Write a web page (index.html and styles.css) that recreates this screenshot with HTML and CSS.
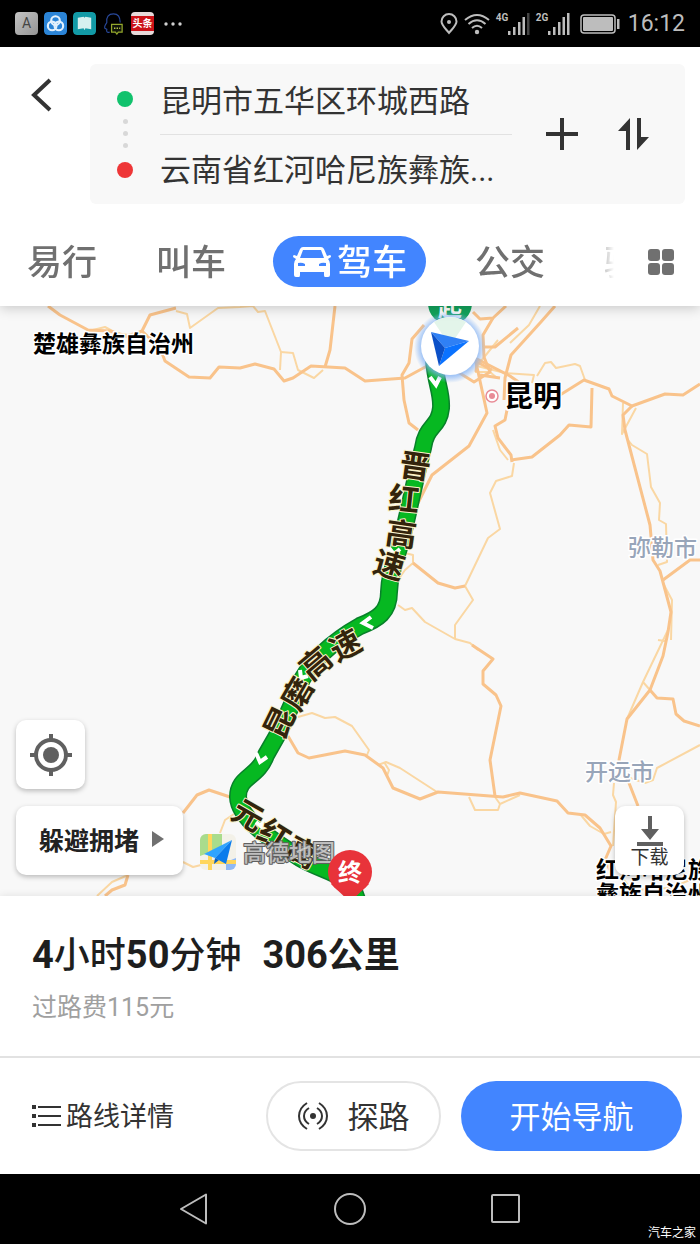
FILE: index.html
```html
<!DOCTYPE html>
<html lang="zh-CN">
<head>
    <meta charset="UTF-8">
    <meta name="viewport" content="width=device-width, initial-scale=1.0">
    <title>路线规划</title>
    <link rel="stylesheet" href="styles.css">
</head>
<body>
    <div class="status-bar">
        <div class="status-left">
            <span class="app-icon app-a">A</span>
            <svg class="app-icon" viewBox="0 0 24 24">
                <rect width="24" height="24" rx="4" fill="#2b84d6"/>
                <g fill="none" stroke="#e4f1fc" stroke-width="2.2">
                    <circle cx="12" cy="9" r="4.5"/>
                    <circle cx="8.5" cy="14.5" r="4.5"/>
                    <circle cx="15.5" cy="14.5" r="4.5"/>
                </g>
            </svg>
            <svg class="app-icon" viewBox="0 0 24 24">
                <rect width="24" height="24" rx="4" fill="#129aa6"/>
                <path d="M5 6 L11 5 L12 6 L13 5 L19 6 V18 L13 17 L12 19 L11 17 L5 18 Z" fill="#d5f0f0"/>
            </svg>
            <svg class="app-icon" viewBox="0 0 24 24">
                <path d="M8 21 Q4 22 5 18 L3 17 Q2 15 5 11 Q4 2 12 2 Q19 2 19 11" fill="none" stroke="#28489a" stroke-width="1.2"/>
                <path d="M10 13 H21 V21 H17 L15.500 23 L14 21 H10 Z" fill="#10140a" stroke="#94a82c" stroke-width="1.300"/>
                <path d="M12.500 17 H19" stroke="#b8c84a" stroke-width="1.500" stroke-dasharray="1.500 1.200"/>
            </svg>
            <span class="app-icon app-news"><b>头条</b></span>
            <svg class="more-dots" viewBox="0 0 18 6">
                <g fill="#d0d0d0"><circle cx="2" cy="3" r="1.700"/><circle cx="9" cy="3" r="1.700"/><circle cx="16" cy="3" r="1.700"/></g>
            </svg>
        </div>
        <div class="status-right">
            <svg width="18" height="22" viewBox="0 0 18 22">
                <path d="M9 20 C5 15 1.500 12 1.500 8.500 A7.500 7.500 0 0 1 16.500 8.500 C16.500 12 13 15 9 20 Z" fill="none" stroke="#bdbdbd" stroke-width="2"/>
                <circle cx="9" cy="9" r="2" fill="#bdbdbd"/>
            </svg>
            <svg width="26" height="22" viewBox="0 0 26 22">
                <g fill="none" stroke="#bdbdbd" stroke-width="2">
                    <path d="M1 7 Q13 -3 25 7"/><path d="M4.500 11 Q13 3.500 21.500 11"/><path d="M8 15 Q13 10.500 18 15"/>
                </g>
                <circle cx="13" cy="19" r="2.200" fill="#bdbdbd"/>
            </svg>
            <span class="signal">
                <span class="net">4G</span>
                <svg width="22" height="22" viewBox="0 0 22 22" fill="#bdbdbd">
                    <path d="M0 18h2.500v4H0zM5 14h2.500v8H5zM10 9h2.500v13H10zM14.500 4h2.500v18h-2.500z"/>
                    <path d="M19 0h2.500v22H19z" fill="#444"/>
                </svg>
            </span>
            <span class="signal">
                <span class="net">2G</span>
                <svg width="22" height="22" viewBox="0 0 22 22" fill="#bdbdbd">
                    <path d="M0 18h2.500v4H0zM5 14h2.500v8H5zM10 9h2.500v13H10zM14.500 4h2.500v18h-2.500zM19 0h2.500v22H19z"/>
                </svg>
            </span>
            <svg class="battery" width="40" height="20" viewBox="0 0 40 20">
                <rect x="1" y="1" width="34" height="18" rx="3" fill="none" stroke="#bdbdbd" stroke-width="1.500"/>
                <rect x="3" y="3" width="30" height="14" rx="1" fill="#bdbdbd"/>
                <rect x="37" y="5" width="2.500" height="10" fill="#bdbdbd"/>
            </svg>
            <span class="clock">16:12</span>
        </div>
    </div>

    <header class="header">
        <div class="search-row">
            <button class="back-btn" aria-label="返回">
                <svg width="22" height="34" viewBox="0 0 22 34"><path d="M20 2 L4 17 L20 32" fill="none" stroke="#333" stroke-width="4"/></svg>
            </button>
            <div class="route-card">
                <div class="route-dots">
                    <i class="dot start"></i>
                    <i class="dot small"></i>
                    <i class="dot small"></i>
                    <i class="dot small"></i>
                    <i class="dot end"></i>
                </div>
                <div class="route-fields">
                    <input class="field" type="text" aria-label="起点" value="昆明市五华区环城西路">
                    <input class="field" type="text" aria-label="终点" value="云南省红河哈尼族彝族...">
                </div>
                <button class="card-btn" aria-label="添加途经点">
                    <svg width="32" height="32" viewBox="0 0 32 32"><path d="M0 16H32M16 0V32" stroke="#333" stroke-width="4"/></svg>
                </button>
                <button class="card-btn" aria-label="交换起终点">
                    <svg width="32" height="32" viewBox="0 0 32 32" fill="#333">
                        <path d="M12 0 V32 H8 V13 H0 Z"/><path d="M19 32 V0 H23 V19 H31 Z"/>
                    </svg>
                </button>
            </div>
        </div>
        <nav class="tabs">
            <div class="tab-list">
                <button class="tab">易行</button>
                <button class="tab">叫车</button>
                <button class="tab active">
                    <svg width="38" height="32" viewBox="0 0 38 32">
                        <path fill="#fff" fill-rule="evenodd" d="M10 1 H28 Q30 1 31 3 L34 10 L37 9 Q38 9 38 11 L35 13 Q37 15 37 18 V29 Q37 31 35 31 H32 Q31 31 31 29 V26 H7 V29 Q7 31 6 31 H3 Q1 31 1 29 V18 Q1 15 3 13 L0 11 Q0 9 1 9 L4 10 L7 3 Q8 1 10 1 Z M10 4 L7 12 H31 L28 4 Z M5 17 V20 H12 V18 Q9 16 5 17 Z M33 17 V20 H26 V18 Q29 16 33 17 Z"/>
                    </svg>
                    <span>驾车</span>
                </button>
                <button class="tab">公交</button>
                <button class="tab">骑行</button>
            </div>
            <button class="all-btn" aria-label="全部">
                <svg width="26" height="26" viewBox="0 0 26 26" fill="#707070">
                    <rect width="12" height="12" rx="3"/><rect x="14" width="12" height="12" rx="3"/>
                    <rect y="14" width="12" height="12" rx="3"/><rect x="14" y="14" width="12" height="12" rx="3"/>
                </svg>
            </button>
        </nav>
    </header>

    <main class="map">
        <svg class="map-canvas" viewBox="0 306 700 590" preserveAspectRatio="xMidYMid slice">
            <defs>
                <radialGradient id="glow">
                    <stop offset="0.800" stop-color="#7fb0f5" stop-opacity="0.700"/>
                    <stop offset="1" stop-color="#7fb0f5" stop-opacity="0"/>
                </radialGradient>
                <clipPath id="logoClip"><rect x="200" y="834" width="36" height="36" rx="6"/></clipPath>
            </defs>

            <!-- minor roads -->
            <g class="road minor">
                <path d="M176 311 L187 314 L190 328 L218 308 L240 307 L253 306 L258 312 L265 311 L281 352 L280 370"/>
                <path d="M281 352 L293 353 L298 370 L314 378 L323 370"/>
                <path d="M93 330 L105 327 L116 333 L128 335 L138 332"/>
                <path d="M540 306 L529 325 L510 343"/>
                <path d="M498 340 L477 366 L505 373 L534 375 L532 383"/>
                <path d="M537 376 L545 363 L551 362 L556 368 L575 364 L580 366 L585 380"/>
                <path d="M475 372 L490 372 L497 378"/>
                <path d="M514 463 L512 476 L496 481 L490 493 L500 529 L488 538 L465 586 L473 600 L455 625 L455 639"/>
                <path d="M398 605 L405 610 L412 608 L425 622 L455 639 L470 643 L478 650"/>
                <path d="M405 553 L413 555 L413 563 L405 570 L398 580"/>
                <path d="M493 430 L500 450 L508 460"/>
                <path d="M623 403 L622 434 L636 408"/>
                <path d="M628 440 L632 445 L647 454 L651 487 L660 503 L659 520 L666 524 L667 562 L658 565"/>
                <path d="M664 585 L672 600 L671 640"/>
                <path d="M668 630 L643 682 L627 719 M658 640 L665 641 M643 682 L650 690"/>
                <path d="M700 745 L657 768 L653 780 L645 783 L630 778"/>
                <path d="M614 783 L613 795 L616 802 L613 846"/>
                <path d="M298 717 L312 713 L325 718 L335 717 L352 726 L369 750 L367 755"/>
                <path d="M378 765 L386 762 L400 768 L437 792 M384 762 L389 770 L387 776"/>
                <path d="M469 797 L475 810 L498 810 L500 804 L520 795 M495 797 L500 804"/>
                <path d="M580 814 L590 826 L604 834 L611 832"/>
                <path d="M234 814 L225 820 L220 833 M183 862 L193 867 L201 865"/>
                <path d="M97 896 L112 882 L128 875 M620 875 L632 890 L670 888 L690 880"/>
            </g>

            <!-- main roads -->
            <g class="road major">
                <path d="M48 306 L60 315 L88 330 L110 331 L128 337 L142 331 L150 315 L176 308"/>
                <path d="M142 331 L160 348 L165 361 L189 377 L210 378 L219 367 L240 368 L255 364 L274 369 L284 381 L293 378 L311 366 L345 368 L365 381 L405 378 L427 366"/>
                <path d="M335 306 L330 350 L325 367"/>
                <path d="M424 325 L412 339 L409 363 L402 375 L404 400 L409 423 L418 430"/>
                <path d="M473 312 L480 319 L493 318 L506 306"/>
                <path d="M493 318 L483 335 L484 357 L490 372 L474 382 L458 372"/>
                <path d="M484 347 L495 347 L518 328"/>
                <path d="M555 306 L540 323 L511 355 L505 378 L504 400"/>
                <path d="M475 358 L510 376 L520 383 M475 358 L487 413 L469 446 L432 475 L417 505"/>
                <path d="M480 375 L500 378 M476 372 L477 362 L492 370"/>
                <path d="M560 395 L584 380 L609 389 L612 396 L632 406 L665 394 L683 395 L700 384"/>
                <path d="M592 388 L591 427 L569 425 L560 435 L532 457 L511 460"/>
                <path d="M507 410 L505 420 L495 426 L498 438 L511 455 L512 462"/>
                <path d="M632 406 L623 415 L625 430 L650 525 L653 560 L660 571 L671 612 L668 632 L663 656 L650 690 L627 719 L619 760 L629 783 L638 806"/>
                <path d="M663 580 L690 560 L700 560"/>
                <path d="M650 690 L657 698 L673 699 L676 714 L684 721 L700 726"/>
                <path d="M413 563 L438 583 L455 588 L465 586"/>
                <path d="M472 645 L493 659 L483 671 L483 684 L496 695 L501 706 L490 760 L495 796"/>
                <path d="M288 736 L298 753 L309 758 L345 751 L365 755 L383 768 L393 788 L420 799 L438 792 L503 797 L520 793 L557 801 L568 813 L585 815 L600 828 L611 846 L605 860 L610 870"/>
                <path d="M183 813 L197 795 L209 790 L230 797"/>
                <path d="M128 875 L125 885 L112 890 L105 896"/>
            </g>

            <!-- place names -->
            <g class="place">
                <text x="33" y="352">楚雄彝族自治州</text>
                <text x="596" y="878">红河哈尼族</text>
                <text x="596" y="902">彝族自治州</text>
            </g>
            <text class="city" x="504" y="407">昆明</text>
            <g class="county">
                <text x="628" y="556">弥勒市</text>
                <text x="585" y="780">开远市</text>
            </g>
            <circle cx="492" cy="396" r="6" fill="#fff" stroke="#e88b96" stroke-width="1.500"/>
            <circle cx="492" cy="396" r="3" fill="#e88b96"/>

            <!-- route -->
            <path class="route-edge" d="M434 360 C436 385 442 392 441 408 C439 428 426 425 423 448 C416 475 410 505 404 530 C396 562 390 570 389 592 C389 612 378 619 360 626 C335 640 308 662 298 688 C290 712 278 735 266 755 C258 778 238 776 238 797 C239 820 275 842 300 858 C325 873 350 872 357 900"/>
            <path class="route-line" d="M434 360 C436 385 442 392 441 408 C439 428 426 425 423 448 C416 475 410 505 404 530 C396 562 390 570 389 592 C389 612 378 619 360 626 C335 640 308 662 298 688 C290 712 278 735 266 755 C258 778 238 776 238 797 C239 820 275 842 300 858 C325 873 350 872 357 900"/>
            <g class="chevron">
                <path d="M430 377 L436 385 L440 377"/>
                <path d="M389 548 L394 554 L400 549"/>
                <path d="M371 617 L363 623 L373 628"/>
                <path d="M300 670 L301 678 L308 676"/>
                <path d="M256 753 L260 762 L267 757"/>
                <path d="M256 822 L263 828 L262 820"/>
            </g>

            <g class="road-name">
                <text transform="translate(415 467) rotate(8)">晋</text>
                <text transform="translate(404 500) rotate(6)">红</text>
                <text transform="translate(401 535) rotate(8)">高</text>
                <text transform="translate(389 566) rotate(16)">速</text>
                <text transform="translate(280 723) rotate(-64)">昆</text>
                <text transform="translate(298 694) rotate(-60)">磨</text>
                <text transform="translate(316 664) rotate(-40)">高</text>
                <text transform="translate(346 646) rotate(-28)">速</text>
                <text transform="translate(248 816) rotate(30)">元</text>
                <text transform="translate(274 836) rotate(32)">红</text>
                <text transform="translate(302 853) rotate(28)">高</text>
            </g>

            <!-- map logo -->
            <g clip-path="url(#logoClip)">
                <rect x="200" y="834" width="36" height="36" fill="#f3f1e8"/>
                <path d="M200 834 H222 V848 L200 856 Z" fill="#a9dc8c"/>
                <path d="M226 870 V862 L236 858 V870 Z" fill="#8fb9f5"/>
                <path d="M200 862 H236 M210 834 V870" stroke="#ffd65c" stroke-width="4"/>
            </g>
            <path d="M232 840 L204 854 L215 858 Z" fill="#2fa4ff"/>
            <path d="M232 840 L215 858 L226 864 Z" fill="#0a7cec"/>
            <path d="M215 858 L214 864 L219 860 Z" fill="#0a5fc0"/>
            <text class="brand" x="243" y="861">高德地图</text>

            <!-- end pin -->
            <path d="M331 884 L350 902 L369 884 Z" fill="#e8333a"/>
            <circle cx="350" cy="872" r="22" fill="#e8333a"/>
            <text class="pin-text" x="350" y="881">终</text>

            <!-- start pin and current position -->
            <circle cx="450" cy="303" r="22" fill="#12a35c"/>
            <text class="pin-text" x="450" y="316">起</text>
            <circle cx="450" cy="347" r="36" fill="url(#glow)"/>
            <circle cx="450" cy="346" r="29" fill="#fff"/>
            <path d="M434 322 A29 29 0 0 1 466 322 L450 346 Z" fill="#e3f5ea"/>
            <path d="M431 332 L469 341 L445 348 Z" fill="#2f80f5"/>
            <path d="M469 341 L439 366 L445 348 Z" fill="#0a72ff"/>
            <path d="M431 332 L445 348 L439 366 Z" fill="#0b50c8"/>
        </svg>

        <button class="map-btn locate-btn" aria-label="定位">
            <svg width="42" height="42" viewBox="0 0 42 42" fill="none" stroke="#606060" stroke-width="4">
                <circle cx="21" cy="21" r="15"/><path d="M21 0V6M21 36V42M0 21H6M36 21H42"/>
                <circle cx="21" cy="21" r="8" fill="#606060" stroke="none"/>
            </svg>
        </button>
        <button class="map-btn avoid-btn">
            <span>躲避拥堵</span>
            <svg width="12" height="16" viewBox="0 0 12 16"><path d="M0 0 L12 8 L0 16 Z" fill="#707070"/></svg>
        </button>
        <button class="map-btn download-btn">
            <svg width="26" height="30" viewBox="0 0 26 30" fill="#606060">
                <path d="M11 0 H15 V13 H22 L13 24 L4 13 H11 Z"/><rect y="26" width="26" height="4"/>
            </svg>
            <span>下载</span>
        </button>
    </main>

    <section class="sheet">
        <div class="summary">
            <h1><b>4</b>小时<b>50</b>分钟 <span class="distance"><b>306</b>公里</span></h1>
            <p>过路费115元</p>
        </div>
        <div class="actions">
            <button class="detail-btn">
                <svg width="29" height="22" viewBox="0 0 29 22" fill="#333">
                    <path d="M0 0h4v4H0zM0 9h4v4H0zM0 18h4v4H0zM6 1h23v2H6zM6 10h23v2H6zM6 19h23v2H6z"/>
                </svg>
                <span>路线详情</span>
            </button>
            <button class="explore-btn">
                <svg width="30" height="28" viewBox="0 0 30 28" fill="none" stroke="#333" stroke-width="2">
                    <path d="M9 1 Q1 6 1 14 Q1 22 9 27M21 1 Q29 6 29 14 Q29 22 21 27"/>
                    <path d="M11 6 Q6 9 6 14 Q6 19 11 22M19 6 Q24 9 24 14 Q24 19 19 22"/>
                    <circle cx="15" cy="14" r="3" fill="#333" stroke="none"/>
                </svg>
                <span>探路</span>
            </button>
            <button class="start-btn"><span>开始导航</span></button>
        </div>
    </section>

    <footer class="nav-bar">
        <button aria-label="返回键">
            <svg width="32" height="34" viewBox="0 0 32 34"><path d="M28 2.500 V31.500 L3 17 Z" fill="none" stroke="#bdbdbd" stroke-width="2" stroke-linejoin="round"/></svg>
        </button>
        <button aria-label="主屏幕">
            <svg width="32" height="34" viewBox="0 0 32 34"><circle cx="16" cy="17" r="15" fill="none" stroke="#bdbdbd" stroke-width="2"/></svg>
        </button>
        <button aria-label="最近任务">
            <svg width="32" height="34" viewBox="0 0 32 34"><rect x="2" y="3" width="27" height="27" rx="1" fill="none" stroke="#bdbdbd" stroke-width="2"/></svg>
        </button>
        <span class="site-mark">汽车之家</span>
    </footer>
</body>
</html>
```

FILE: styles.css
```css
* {
    box-sizing: border-box;
}

body {
    margin: 0;
    font-family: Roboto, "Noto Sans CJK SC", sans-serif;
    background-color: #fff;
    color: #333;
}

button {
    display: flex;
    align-items: center;
    justify-content: center;
    padding: 0;
    border: none;
    background: none;
    color: inherit;
    font-family: inherit;
    white-space: nowrap;
    cursor: pointer;
}

svg {
    display: block;
    flex: none;
}

/* Status bar */
.status-bar {
    display: flex;
    align-items: center;
    justify-content: space-between;
    height: 47px;
    padding: 0 15px;
    background-color: #000;
    color: #bdbdbd;
}

.status-left {
    display: flex;
    align-items: center;
    gap: 6px;
}

.app-icon {
    display: block;
    width: 23px;
    height: 23px;
    border-radius: 4px;
}

.app-a {
    background: linear-gradient(135deg, #c4c4c4, #949494);
    color: #444;
    font-size: 14px;
    line-height: 23px;
    text-align: center;
}

.app-news {
    padding: 4px 0;
    background-color: #e6dada;
}

.app-news b {
    display: block;
    background-color: #cc1218;
    color: #fff;
    font-size: 10px;
    line-height: 15px;
    text-align: center;
}

.more-dots {
    width: 18px;
    height: 6px;
    margin-left: 4px;
}

.status-right {
    display: flex;
    align-items: center;
    gap: 6px;
}

.signal {
    display: flex;
    align-items: flex-start;
}

.net {
    width: 12px;
    font-size: 10px;
    font-weight: bold;
    line-height: 10px;
}

.battery {
    margin-left: 4px;
}

.clock {
    margin-left: 2px;
    font-size: 23px;
    line-height: 28px;
}

/* Header */
.header {
    position: relative;
    z-index: 1;
    padding: 17px 15px 19px;
    background-color: #fff;
    box-shadow: 0 2px 12px rgba(0, 0, 0, 0.2);
}

.search-row {
    display: flex;
    align-items: flex-start;
}

.back-btn {
    width: 52px;
    height: 62px;
}

.route-card {
    display: flex;
    flex: 1;
    align-items: center;
    min-width: 0;
    margin-left: 23px;
    padding-right: 35px;
    border-radius: 6px;
    background-color: #f8f8f8;
}

.route-dots {
    display: flex;
    flex-direction: column;
    align-items: center;
    gap: 7px;
    width: 70px;
}

.dot {
    width: 16px;
    height: 16px;
    border-radius: 50%;
}

.dot.start {
    margin-bottom: 5px;
    background-color: #11c26d;
}

.dot.end {
    margin-top: 7px;
    background-color: #ee3637;
}

.dot.small {
    width: 5px;
    height: 5px;
    background-color: #d8d8d8;
}

.route-fields {
    flex: 1;
    min-width: 0;
    padding: 2px 0 1px;
}

.field {
    display: block;
    width: 100%;
    height: 68px;
    padding: 0 0 3px;
    border: none;
    background: none;
    color: #333;
    font-family: inherit;
    font-size: 31px;
}

.field:first-child {
    height: 69px;
    border-bottom: 1px solid #e2e2e2;
}

.card-btn {
    width: 32px;
    height: 64px;
    margin-left: 34px;
}

.card-btn + .card-btn {
    margin-left: 40px;
}

/* Travel mode tabs */
.tabs {
    display: flex;
    align-items: center;
    margin-top: 32px;
    padding: 0 11px 0 12px;
}

.tab-list {
    display: flex;
    flex: 1;
    gap: 59px;
    min-width: 0;
    overflow: hidden;
    -webkit-mask-image: linear-gradient(to left, transparent, #000 24px);
    mask-image: linear-gradient(to left, transparent, #000 24px);
}

.tab {
    flex: none;
    height: 51px;
    padding-top: 5px;
    color: #707070;
    font-size: 35px;
    font-weight: 500;
    line-height: 46px;
}

.tab.active {
    gap: 6px;
    margin: 0 -10px 0 -12px;
    padding: 0 19px 0 20px;
    border-radius: 26px;
    background-color: #4285ff;
    color: #fff;
}

.tab.active span {
    padding-top: 5px;
}

.all-btn {
    margin-left: 34px;
}

/* Map */
.map {
    position: relative;
    overflow: hidden;
    background-color: #f8f8f8;
}

.map-canvas {
    width: 100%;
    height: auto;
}

.road {
    fill: none;
    stroke-linejoin: round;
}

.road.minor {
    stroke: #fad7a3;
    stroke-width: 2;
}

.road.major {
    stroke: #f9c38b;
    stroke-width: 3;
}

.map text {
    paint-order: stroke;
    stroke-linejoin: round;
}

.place {
    fill: #000;
    stroke: #fff;
    stroke-width: 3px;
    font-size: 23px;
    font-weight: bold;
}

.city {
    fill: #000;
    stroke: #fff;
    stroke-width: 3px;
    font-size: 29px;
    font-weight: bold;
}

.county {
    fill: #98a5b9;
    stroke: #fff;
    stroke-width: 3px;
    font-size: 23px;
    font-weight: 500;
}

.route-edge,
.route-line {
    fill: none;
    stroke: #08802a;
    stroke-width: 18px;
}

.route-line {
    stroke: #06b821;
    stroke-width: 15px;
}

.chevron {
    fill: none;
    stroke: #fff;
    stroke-width: 4px;
}

.road-name {
    fill: #33240c;
    stroke: #fbf3c8;
    stroke-width: 2px;
    font-size: 31px;
    font-weight: bold;
    text-anchor: middle;
    dominant-baseline: central;
}

.brand {
    fill: rgba(255, 255, 255, 0.6);
    stroke: #606060;
    stroke-width: 2px;
    font-size: 23px;
    font-weight: 500;
}

.pin-text {
    fill: #fff;
    font-size: 24px;
    font-weight: bold;
    text-anchor: middle;
}

.map-btn {
    position: absolute;
    height: 69px;
    border-radius: 10px;
    background-color: #fff;
    box-shadow: 0 2px 5px rgba(0, 0, 0, 0.25);
}

.locate-btn {
    bottom: 107px;
    left: 16px;
    width: 69px;
}

.avoid-btn {
    bottom: 21px;
    left: 16px;
    gap: 13px;
    padding: 0 19px 3px 23px;
    color: #222;
    font-size: 25px;
    font-weight: bold;
}

.download-btn {
    right: 16px;
    bottom: 21px;
    flex-direction: column;
    width: 69px;
    padding-top: 5px;
    font-size: 19px;
    line-height: 24px;
}

/* Bottom sheet */
.sheet {
    position: relative;
    background-color: #fff;
    box-shadow: 0 0 8px rgba(0, 0, 0, 0.1);
}

.summary {
    padding: 32px 32px 30px;
    border-bottom: 2px solid #e2e2e2;
}

.summary h1 {
    margin: 0;
    color: #1e1e1e;
    font-size: 36px;
    font-weight: 500;
    line-height: 54px;
}

.summary h1 b {
    font-size: 38px;
    font-weight: bold;
}

.distance {
    margin-left: 12px;
    font-weight: bold;
}

.summary p {
    margin: 7px 0 0;
    color: #a0a0a0;
    font-size: 25px;
    line-height: 36px;
}

.actions {
    display: flex;
    align-items: center;
    padding: 23px 18px 23px 32px;
}

.actions span {
    padding-bottom: 4px;
}

.detail-btn {
    gap: 5px;
    margin-right: auto;
    font-size: 27px;
}

.explore-btn {
    gap: 20px;
    width: 175px;
    height: 70px;
    border: 2px solid #e4e4e4;
    border-radius: 35px;
    font-size: 31px;
}

.start-btn {
    width: 221px;
    height: 70px;
    margin-left: 20px;
    border-radius: 35px;
    background-color: #4285ff;
    color: #fff;
    font-size: 31px;
}

/* System navigation */
.nav-bar {
    position: relative;
    display: flex;
    align-items: center;
    justify-content: center;
    gap: 124px;
    height: 70px;
    background-color: #000;
}

.site-mark {
    position: absolute;
    right: 4px;
    bottom: 2px;
    color: #fff;
    font-size: 12px;
    line-height: 18px;
}
```
